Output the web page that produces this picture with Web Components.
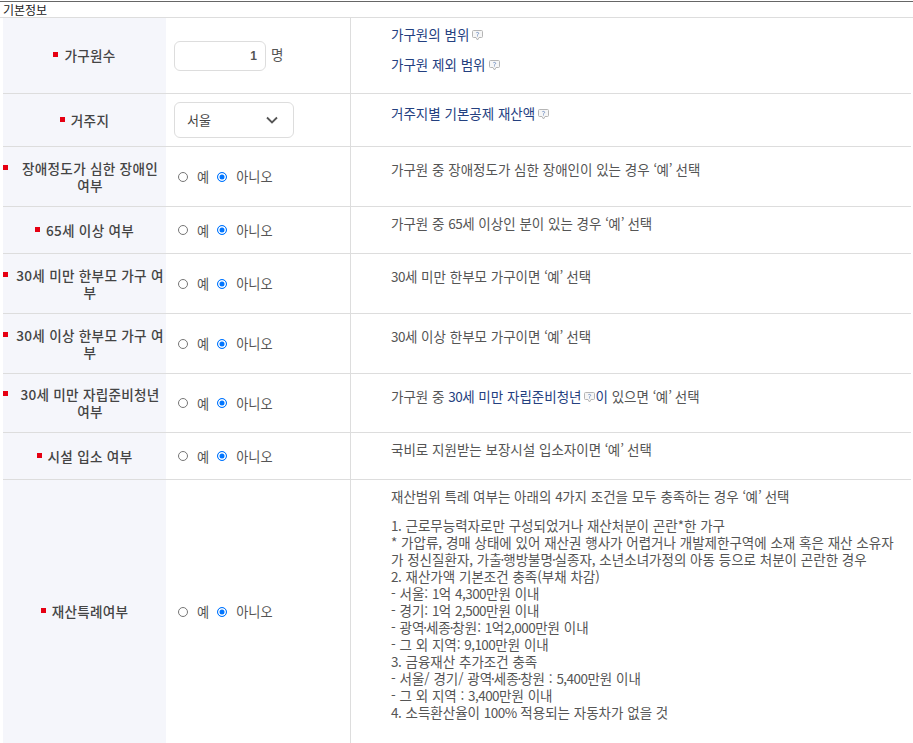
<!DOCTYPE html>
<html lang="ko"><head><meta charset="utf-8"><title>기본정보</title>
<style>
html,body{margin:0;padding:0;height:743px;overflow:hidden;background:#fff}
body{font-family:"Noto Sans CJK KR","Noto Sans",sans-serif;color:#555;font-size:13.5px;line-height:17px}
.n{letter-spacing:-.55px}
.d{margin:0 -1.1px}
.q{letter-spacing:-.8px}
</style></head><body>
<template id="t-row"><style>
:host{display:grid;grid-template-columns:163px 184px 1fr;border-bottom:1px solid #ddd;box-sizing:border-box}
.th{background:#f5f6fb;display:flex;align-items:center;justify-content:center;font-weight:500;font-size:13.6px;color:#444;text-align:center;letter-spacing:.02em}
.mk{flex:none;width:5px;height:5px;background:#e60012;margin:0 6px 0 0;align-self:flex-start}
.ctl{display:flex;align-items:center;padding-left:8px}
.desc{border-left:1px solid #ddd;display:flex;align-items:center;padding:0 11px 14px 40px}
.desc>div{width:100%}
.t{flex:0 1 auto}
.w{display:flex;width:100%;justify-content:center;align-items:flex-start}
.w .mk{margin-top:5px}
</style><div class="th"><div class="w"><span class="mk"></span><div class="t"><slot name="label"></slot></div></div></div><div class="ctl"><slot name="control"></slot></div><div class="desc"><div><slot></slot></div></div></template>
<template id="t-table"><style>
:host{display:block;padding:1px 2px 0 3px}
h2{margin:0 -2px 0 -3px;padding:1px 3px 0;border-top:1px solid #666;border-bottom:1px solid #ddd;height:14px;font-size:12px;font-weight:400;color:#222;line-height:14px}
</style><h2><slot name="title"></slot></h2><slot></slot></template>
<template id="t-radio"><style>
:host{display:inline-flex;align-items:center;gap:8px;color:#555;padding-left:4px;font-size:13.2px}
label{display:inline-flex;align-items:center;gap:9px}
i{box-sizing:border-box;width:10px;height:10px;border-radius:50%;border:1px solid #767676;background:#fff;display:block}
i.on{border-color:#0075ff;box-shadow:inset 0 0 0 1.5px #fff;background:#0075ff}
</style><label><i></i>예</label><label><i class="on"></i>아니오</label></template>
<template id="t-num"><style>
:host{display:inline-flex;align-items:center;gap:5px;color:#555}
div{box-sizing:border-box;width:92px;height:30px;border:1px solid #ddd;border-radius:6px;text-align:right;padding:0 8px 0 0;line-height:28px;font-weight:700;color:#555;font-size:12px;font-family:"Liberation Sans",sans-serif}
span{position:relative;top:-1px}
</style><div>1</div><span><slot></slot></span></template>
<template id="t-select"><style>
:host{box-sizing:border-box;display:flex;align-items:center;justify-content:space-between;width:120px;height:36px;border:1px solid #ddd;border-radius:6px;padding:0 15px 2px 12px;color:#444;font-size:13px}
svg{display:block;margin-top:2px}
</style><slot></slot><svg width="12" height="8" viewBox="0 0 12 8"><path d="M1 1.500 6 6.500 11 1.500" fill="none" stroke="#555" stroke-width="1.800"/></svg></template>
<template id="t-help"><style>
:host{display:inline-block;width:11px;height:11px;vertical-align:-1px;margin-left:3px}
svg{display:block}
</style><svg width="11" height="11" viewBox="0 0 11 11"><path d="M1.500.5h8a1 1 0 0 1 1 1v5a1 1 0 0 1-1 1H7L5.500 10 4 7.500H1.500a1 1 0 0 1-1-1v-5a1 1 0 0 1 1-1Z" fill="#f6f6f6" stroke="#b5b5b5"/><path d="M4.300 2.800c.3-.6 2.400-.6 2.400.5 0 .8-1.200.8-1.200 1.500" fill="none" stroke="#6f8cc0" stroke-width=".9"/><rect x="5" y="5.400" width="1" height="1" fill="#6f8cc0"/></svg></template>
<template id="t-link"><style>:host{color:#24407f}</style><slot></slot></template>
<script>
const def=(n,id)=>customElements.define(n,class extends HTMLElement{constructor(){super();this.attachShadow({mode:"open"}).append(document.getElementById(id).content.cloneNode(true));}});
def("info-table","t-table");def("info-row","t-row");def("yes-no","t-radio");def("num-box","t-num");def("sel-box","t-select");def("help-ic","t-help");def("info-link","t-link");
</script>
<info-table>
<span slot="title">기본정보</span>
<info-row style="height:76px"><span slot="label">가구원수</span><num-box slot="control">명</num-box><div style="padding-top:1px"><info-link>가구원의 범위<help-ic></help-ic></info-link></div><div style="margin-top:13px"><info-link>가구원 제외 범위<help-ic></help-ic></info-link></div></info-row>
<info-row style="height:53px"><span slot="label">거주지</span><sel-box slot="control">서울</sel-box><info-link>거주지별 기본공제 재산액<help-ic></help-ic></info-link></info-row>
<info-row style="height:60px"><span slot="label">장애정도가 심한 장애인 여부</span><yes-no slot="control"></yes-no>가구원 중 장애정도가 심한 장애인이 있는 경우 ‘예’ 선택</info-row>
<info-row style="height:47px"><span slot="label">65세 이상 여부</span><yes-no slot="control"></yes-no>가구원 중 65세 이상인 분이 있는 경우 ‘예’ 선택</info-row>
<info-row style="height:60px"><span slot="label">30세 미만 한부모 가구 여부</span><yes-no slot="control"></yes-no>30세 미만 한부모 가구이면 ‘예’ 선택</info-row>
<info-row style="height:60px"><span slot="label">30세 이상 한부모 가구 여부</span><yes-no slot="control"></yes-no>30세 이상 한부모 가구이면 ‘예’ 선택</info-row>
<info-row style="height:59px"><span slot="label">30세 미만 자립준비청년 여부</span><yes-no slot="control"></yes-no>가구원 중 <info-link>30세 미만 자립준비청년<help-ic></help-ic>이</info-link> 있으면 ‘예’ 선택</info-row>
<info-row style="height:47px"><span slot="label">시설 입소 여부</span><yes-no slot="control"></yes-no>국비로 지원받는 보장시설 입소자이면 ‘예’ 선택</info-row>
<info-row style="height:264px"><span slot="label">재산특례여부</span><yes-no slot="control"></yes-no><div style="margin-bottom:12px">재산범위 특례 여부는 아래의 4가지 조건을 모두 충족하는 경우 ‘예’ 선택</div>1. 근로무능력자로만 구성되었거나 재산처분이 곤란*한 가구<br>* 가압류, 경매 상태에 있어 재산권 행사가 어렵거나 개발제한구역에 소재 혹은 재산 소유자<br>가 정신질환자, 가출·행방불명·실종자, 소년소녀가정의 아동 등으로 처분이 곤란한 경우<br>2. 재산가액 기본조건 충족(부채 차감)<br>- 서울: 1억 4,300만원 이내<br>- 경기: 1억 2,500만원 이내<br>- 광역·세종·창원: 1억2,000만원 이내<br>- 그 외 지역: 9,100만원 이내<br>3. 금융재산 추가조건 충족<br>- 서울/ 경기/ 광역·세종·창원 : 5,400만원 이내<br>- 그 외 지역 : 3,400만원 이내<br>4. 소득환산율이 100% 적용되는 자동차가 없을 것</info-row>
</info-table>
<script>
const cls=s=>/[·]/.test(s)?"d":/[‘’]/.test(s)?"q":"n";
document.querySelectorAll("info-row").forEach(r=>{
  const w=document.createTreeWalker(r,NodeFilter.SHOW_TEXT),list=[];
  while(w.nextNode()){const p=w.currentNode.parentElement;if(!p.closest('[slot]'))list.push(w.currentNode);}
  list.forEach(t=>{
    if(!/[\d·‘’]/.test(t.data))return;
    const f=document.createDocumentFragment();
    t.data.split(/([\d,]*\d[\d,%]*|·|[‘’])/).forEach(s=>{
      if(!s)return;
      if(/^([\d,]*\d[\d,%]*|·|[‘’])$/.test(s)){const e=document.createElement("span");e.className=cls(s);e.textContent=s;f.append(e);}
      else f.append(s);
    });
    t.replaceWith(f);
  });
});
</script>
</body></html>
